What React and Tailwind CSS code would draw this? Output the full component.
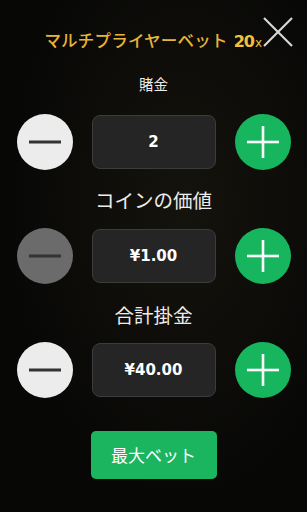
import React from "react";

const jp = { fontFamily: '"Noto Sans CJK JP", "Noto Sans", sans-serif' };
const num = { fontFamily: '"DejaVu Sans", "Liberation Sans", sans-serif' };

function Minus({ dim }) {
  return (
    <div className={`w-[56px] h-[56px] rounded-full flex items-center justify-center shrink-0 ${dim ? "bg-[#6b6b6b]" : "bg-[#ececec]"}`}>
      <svg width="32" height="32" viewBox="0 0 32 32">
        <line x1="0" y1="16" x2="32" y2="16" stroke="#333" strokeWidth="3" />
      </svg>
    </div>
  );
}

function Plus() {
  return (
    <div className="w-[56px] h-[56px] rounded-full flex items-center justify-center shrink-0 bg-[#17b55e]">
      <svg width="32" height="32" viewBox="0 0 32 32">
        <line x1="0" y1="16" x2="32" y2="16" stroke="#fff" strokeWidth="2.6" />
        <line x1="16" y1="0" x2="16" y2="32" stroke="#fff" strokeWidth="2.6" />
      </svg>
    </div>
  );
}

function Row({ value, dim }) {
  return (
    <div className="flex items-center justify-center gap-[19px]">
      <Minus dim={dim} />
      <div className="w-[124px] h-[54px] rounded-[8px] bg-[#252525] border border-[#3c3c3c] flex items-center justify-center">
        <span style={num} className="text-white font-bold text-[15px]">{value}</span>
      </div>
      <Plus />
    </div>
  );
}

export default function App() {
  return (
    <div className="w-[307px] h-[512px] overflow-hidden bg-[radial-gradient(ellipse_at_60%_40%,#15130d_0%,#070706_70%)] flex flex-col">
      <div className="flex items-end justify-end pr-[14px] pt-[17px] h-[48px]">
        <div style={jp} className="flex items-baseline text-[#e8b53a] mb-[-6px] mr-[1px] font-medium">
          <span className="text-[16.5px] tracking-[0.2px]">マルチプライヤーベット</span>
          <span style={num} className="ml-[6px] text-[16px] font-bold text-[#f2c03f] tracking-[-1px]">20</span>
          <span style={num} className="text-[12px] text-[#f2c03f] ml-[1px]">x</span>
        </div>
        <svg width="30" height="30" viewBox="0 0 30 30" className="shrink-0 mb-[1px]">
          <line x1="1" y1="1" x2="29" y2="29" stroke="#d8d8d8" strokeWidth="2.2" />
          <line x1="29" y1="1" x2="1" y2="29" stroke="#d8d8d8" strokeWidth="2.2" />
        </svg>
      </div>

      <div style={jp} className="mt-[26px] h-[20px] leading-[20px] text-center text-[14.5px] text-[#ececec]">賭金</div>
      <div className="mt-[20px]"><Row value="2" /></div>

      <div style={jp} className="mt-[18px] h-[24px] leading-[24px] text-center text-[19.5px] text-[#ececec]">コインの価値</div>
      <div className="mt-[16px]"><Row value="¥1.00" dim /></div>

      <div style={jp} className="mt-[19px] h-[24px] leading-[24px] text-center text-[19.5px] text-[#ececec]">合計掛金</div>
      <div className="mt-[15px]"><Row value="¥40.00" /></div>

      <div className="mt-[33px] flex justify-center">
        <div className="w-[126px] h-[48px] rounded-[5px] bg-[#1bb55f] flex items-center justify-center">
          <span style={jp} className="text-white text-[17px]">最大ベット</span>
        </div>
      </div>
    </div>
  );
}
